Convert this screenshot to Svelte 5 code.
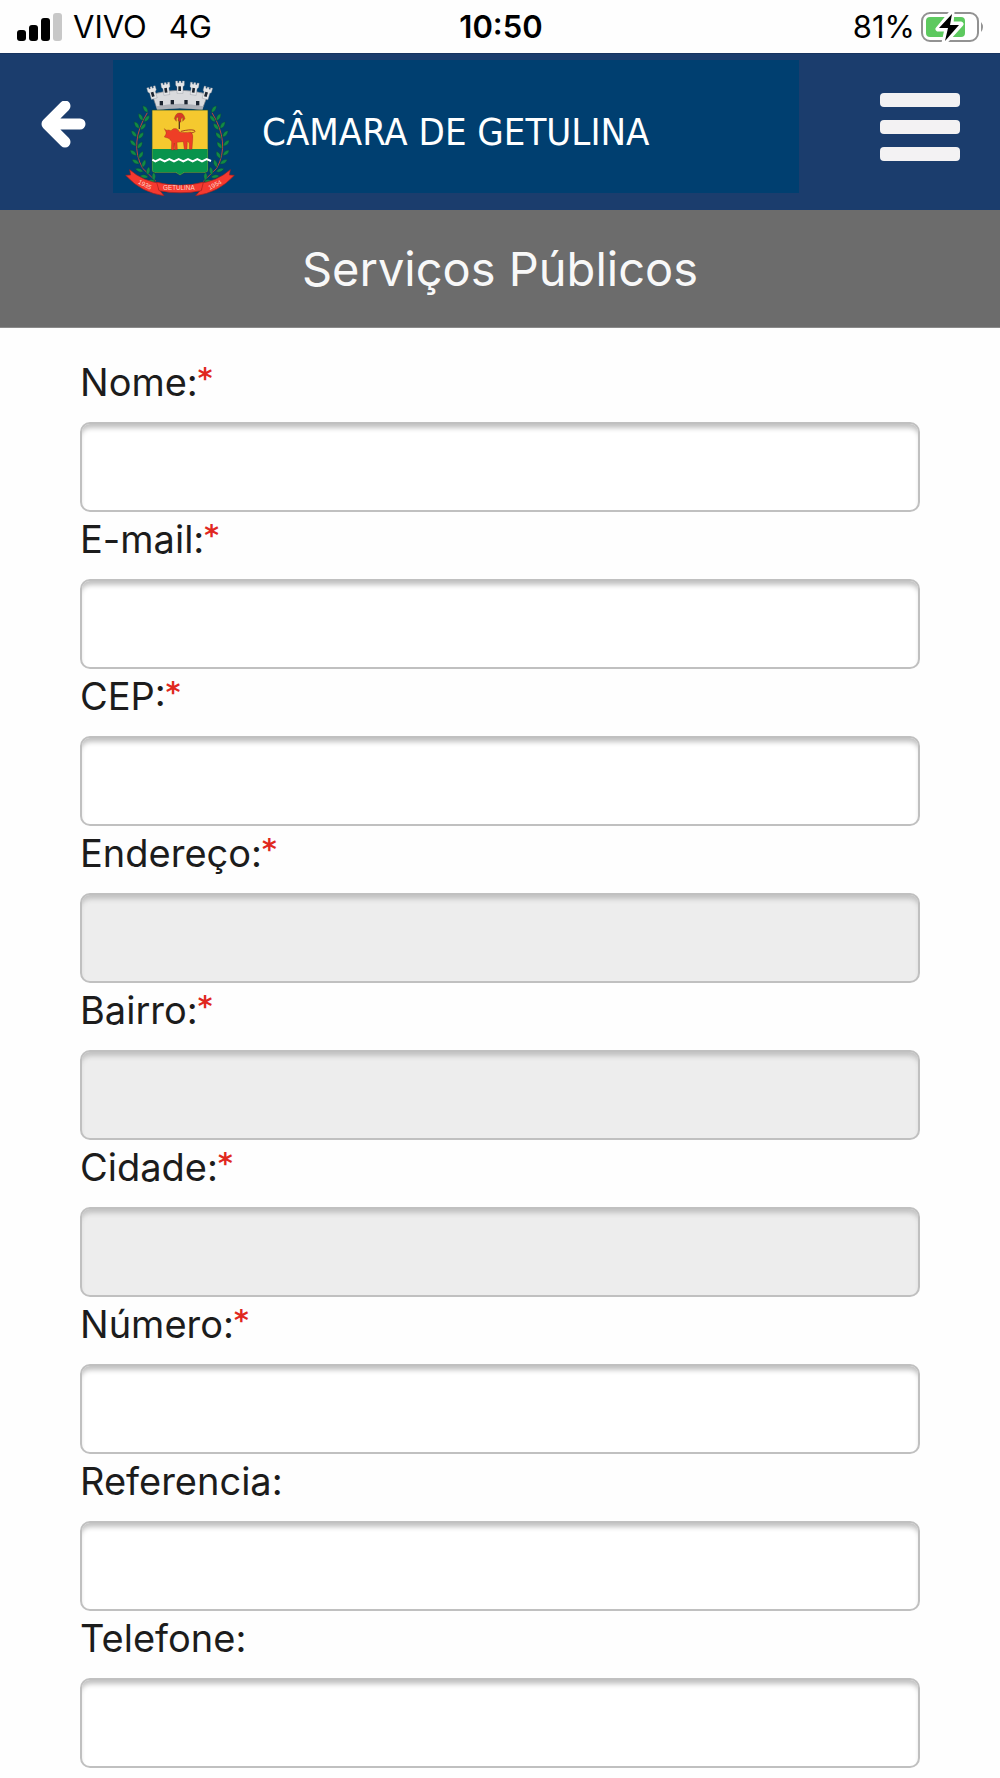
<script>
  const fields = [
    { id: 'nome', label: 'Nome:', required: true, type: 'text' },
    { id: 'email', label: 'E-mail:', required: true, type: 'email' },
    { id: 'cep', label: 'CEP:', required: true, type: 'text' },
    { id: 'endereco', label: 'Endereço:', required: true, type: 'text', disabled: true },
    { id: 'bairro', label: 'Bairro:', required: true, type: 'text', disabled: true },
    { id: 'cidade', label: 'Cidade:', required: true, type: 'text', disabled: true },
    { id: 'numero', label: 'Número:', required: true, type: 'text' },
    { id: 'referencia', label: 'Referencia:', type: 'text' },
    { id: 'telefone', label: 'Telefone:', type: 'tel' }
  ];

  // Leaf positions along the left laurel branch: x, y, rotation
  const leaves = [
    [106, 148, -35], [92, 172, -30], [110, 176, 40], [80, 196, -35], [99, 200, 40],
    [72, 222, -40], [92, 227, 40], [69, 250, -45], [89, 256, 35], [70, 279, -50],
    [92, 285, 30], [77, 306, -60], [101, 311, 20], [88, 331, -70], [114, 333, 10],
    [103, 350, -80], [131, 350, 0], [124, 364, -90]
  ];
  const turrets = [
    [126, 92, -16], [167, 80, -8], [210, 75, 0], [253, 80, 8], [292, 93, 16]
  ];
</script>

<div class="status">
  <div class="side">
    <svg class="signal" viewBox="0 0 45 28" aria-label="Sinal">
      <rect x="0" y="17" width="9" height="11" rx="3" />
      <rect x="12" y="12" width="9" height="16" rx="3" />
      <rect x="24" y="5" width="9" height="23" rx="3" />
      <rect x="36" y="0" width="9" height="28" rx="3" fill="#c8c8c8" />
    </svg>
    <span>VIVO</span>
    <span class="network">4G</span>
  </div>
  <time>10:50</time>
  <div class="side end">
    <span>81%</span>
    <svg class="battery" viewBox="0 0 64 34" aria-label="Bateria carregando">
      <rect x="1" y="3" width="56" height="28" rx="8" fill="#fff" stroke="#929292" stroke-width="2" />
      <rect x="5" y="7" width="39" height="20" rx="4" fill="#5dc95f" />
      <path d="M60 12q4 5 0 10z" fill="#929292" />
      <path d="M31 2L17 19h9l-3 14 17-19h-10z" fill="#000" stroke="#fff" stroke-width="5" stroke-linejoin="round" />
      <path d="M31 4L18 18h9l-3 13 14-16h-9z" fill="#000" />
    </svg>
  </div>
</div>

<header>
  <button class="back" type="button" aria-label="Voltar">
    <svg viewBox="0 0 46 52">
      <path d="M24 5L6 23l18 18M8 23h31" fill="none" stroke="#fff" stroke-width="11" stroke-linecap="round" stroke-linejoin="round" />
    </svg>
  </button>

  <div class="brand">
    <svg class="crest" viewBox="45 60 330 351" aria-label="Brasão de Getulina">
      <g fill="#118a45" stroke="#0b3f35" stroke-width="1">
        {#each [false, true] as flip}
          <g transform={flip ? 'translate(418 0) scale(-1 1)' : undefined}>
            <path d="M112 158Q56 250 98 325L138 364" fill="none" stroke="#b8453a" stroke-width="3" />
            {#each leaves as [x, y, r]}
              <path d="M0 -13Q11 -2 1 12Q-10 2 0 -13z" transform={`translate(${x} ${y}) rotate(${r})`} />
            {/each}
          </g>
        {/each}
      </g>

      <path d="M126 103Q210 78 294 103L276 150Q210 138 142 150z" fill="#d9dadd" stroke="#777b84" stroke-width="2" />
      <path d="M139 139Q210 124 280 139L277 150Q210 140 142 150z" fill="#aeb1b8" />
      {#each turrets as [x, y, r]}
        <g transform={`translate(${x} ${y}) rotate(${r})`}>
          <path d="M-13 -12h6v5h4v-5h6v5h4v-5h6v13l-4 4v20h-18v-20l-4 -4z" fill="#e4e5e7" stroke="#858891" stroke-width="1" />
          <rect x="-5" y="4" width="8" height="14" fill="#1c2430" />
        </g>
      {/each}
      <g fill="#1c2430">
        <rect x="149" y="123" width="10" height="13" />
        <rect x="182" y="120" width="10" height="13" />
        <rect x="223" y="120" width="10" height="13" />
        <rect x="258" y="123" width="10" height="13" />
      </g>

      <path d="M126 150H294V330Q294 337 284 338H222L210 346L198 338H136Q126 337 126 330z" fill="#f5c92f" stroke="#17483a" stroke-width="2" />
      <path d="M127 267H293V330Q293 336 284 337H222L210 345L198 337H136Q127 336 127 330z" fill="#08934c" />
      <path d="M127 299l9 5 14-7 14 7 14-7 14 7 14-7 14 7 14-7 14 7 14-7 14 7 14-7 13 6" fill="none" stroke="#fff" stroke-width="6" />
      <path d="M208 166V207" stroke="#5b3d1c" stroke-width="4" />
      <path d="M193 176Q197 158 209 159Q221 158 225 176L218 184V171L213 177V187L204 182L205 171L199 174V184z" fill="#d83a25" stroke="#7c4a13" stroke-width="1" />
      <path d="M163 206Q168 213 176 210L183 212Q190 203 199 206Q207 210 207 215Q222 220 242 216Q251 222 248 240L246 268H238L238 249L232 244L231 268H223L220 245L201 247L202 269H194L193 249L191 270H184L185 245L178 236L173 234L163 231L168 222L168 216z" fill="#ee3e26" stroke="#8a2a17" stroke-width="1" />
      <path d="M243 219Q260 216 253 211Q240 207 213 214" fill="none" stroke="#a5421e" stroke-width="3" />

      <g fill="#f5392f" stroke="#a3201c" stroke-width="2">
        <path d="M59 329Q100 365 154 370L146 387L162 407Q95 399 47 346L62 345z" />
        <path d="M361 329Q320 365 266 370L275 387L257 407Q325 399 373 346L358 345z" />
        <path d="M140 367Q210 384 280 367L274 392Q210 405 147 392z" />
      </g>
      <g class="motto">
        <text x="159" y="391">GETULINA</text>
        <text transform="translate(83 370) rotate(27)">1935</text>
        <text transform="translate(299 390) rotate(-27)">1954</text>
      </g>
    </svg>
    <span class="name">CÂMARA DE GETULINA</span>
  </div>

  <button class="menu" type="button" aria-label="Menu">
    <span></span><span></span><span></span>
  </button>
</header>

<h1>Serviços Públicos</h1>

<form>
  {#each fields as field}
    <div class="field">
      <label for={field.id}>{field.label}{#if field.required}<span class="mark">*</span>{/if}</label>
      <input id={field.id} name={field.id} type={field.type} required={field.required} disabled={field.disabled} />
    </div>
  {/each}
</form>

<style>
  :global(body) {
    margin: 0;
    background: #fefefe;
    font-family: Inter, "Liberation Sans", sans-serif;
  }

  svg {
    display: block;
  }

  button {
    padding: 0;
    border: 0;
    background: none;
    cursor: pointer;
  }

  .status {
    display: grid;
    grid-template-columns: 1fr auto 1fr;
    align-items: center;
    height: 53px;
    padding: 0 15px 0 17px;
    font-size: 31px;
    color: #000;
  }

  .side {
    display: flex;
    align-items: center;
    gap: 11px;
  }

  .network {
    margin-left: 11px;
  }

  .end {
    justify-content: flex-end;
    gap: 6px;
  }

  .signal {
    width: 45px;
    height: 28px;
  }

  .battery {
    width: 64px;
    height: 34px;
  }

  time {
    font-weight: 600;
  }

  header {
    display: flex;
    align-items: center;
    padding: 6px 40px 17px 41px;
    border-top: 1px solid #173460;
    background: #1b3d6d;
  }

  .back {
    width: 46px;
    margin-right: 26px;
  }

  .brand {
    display: flex;
    align-items: flex-start;
    box-sizing: border-box;
    flex: 0 1 686px;
    height: 133px;
    padding: 20px 0 0 12px;
    background: #003f70;
  }

  .crest {
    flex: none;
    width: 110px;
    height: 117px;
  }

  .motto {
    fill: #ffd5c8;
    font-family: "Liberation Sans", sans-serif;
    font-size: 19px;
  }

  .name {
    margin: 27px 0 0 27px;
    font-family: "DejaVu Sans Condensed", "DejaVu Sans", sans-serif;
    font-stretch: condensed;
    font-size: 38px;
    line-height: 50px;
    white-space: nowrap;
    color: #fff;
  }

  .menu {
    display: flex;
    flex-direction: column;
    gap: 13px;
    width: 80px;
    margin-left: auto;
  }

  .menu span {
    height: 14px;
    border-radius: 4px;
    background: #f3f2f3;
  }

  h1 {
    margin: 0;
    border-bottom: 1px solid #8a8a8a;
    background: #6c6c6c;
    color: #f8f8f8;
    font-size: 47px;
    font-weight: 400;
    line-height: 117px;
    text-align: center;
  }

  form {
    padding: 27px 80px 8px;
  }

  .field {
    display: flex;
    flex-direction: column;
  }

  label {
    height: 67px;
    font-size: 38px;
    line-height: 54px;
    color: #1c1c1c;
  }

  .mark {
    font-family: "DejaVu Sans", sans-serif;
    font-size: 28px;
    font-weight: 700;
    line-height: 20px;
    vertical-align: 8px;
    color: #e0281f;
  }

  input {
    box-sizing: border-box;
    width: 100%;
    height: 90px;
    margin: 0;
    padding: 0 20px;
    border: 2px solid #c0c0c0;
    border-radius: 10px;
    background: #fff;
    box-shadow: inset 0 6px 5px -2px #c2c2c2;
    font: inherit;
    font-size: 38px;
  }

  input:disabled {
    background: #ededed;
  }
</style>
